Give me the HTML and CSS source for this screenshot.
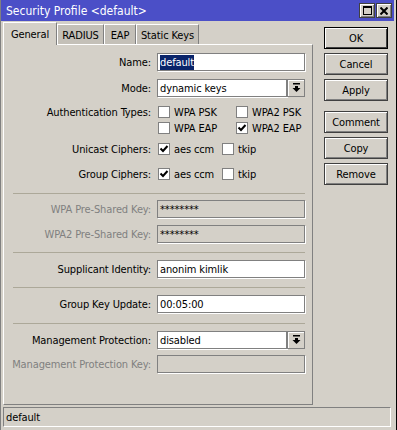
FILE: index.html
```html
<!DOCTYPE html>
<html lang="en">
<head>
  <meta charset="UTF-8" />
  <title>Security Profile &lt;default&gt;</title>
  <link rel="stylesheet" href="styles.css">
</head>
<body>
  <div class="window">
    <div class="titlebar">
      <span class="title">Security Profile &lt;default&gt;</span>
      <div class="winbtns">
        <span class="winbtn">
          <svg width="9" height="9" viewBox="0 0 9 9"><rect x="0.5" y="0.5" width="8" height="8" fill="none" stroke="#000"/><rect x="0" y="0" width="9" height="2" fill="#000"/></svg>
        </span>
        <span class="winbtn">
          <svg width="8" height="8" viewBox="0 0 8 8"><path d="M0.5 0.5 L7.5 7.5 M7.5 0.5 L0.5 7.5" stroke="#000" stroke-width="2"/></svg>
        </span>
      </div>
    </div>

    <div class="content">
      <div class="main">
        <div class="tabs">
          <span class="tab active tab-general">General</span>
          <span class="tab tab-radius">RADIUS</span>
          <span class="tab tab-eap">EAP</span>
          <span class="tab tab-keys">Static Keys</span>
        </div>

        <div class="panel">
          <div class="row row-name">
            <span class="lbl">Name:</span>
            <span class="input"><span class="selected">default</span></span>
          </div>
          <div class="row row-mode">
            <span class="lbl">Mode:</span>
            <span class="input input-combo">dynamic keys</span>
            <span class="dropbtn">
              <svg width="9" height="10" viewBox="0 0 9 10"><rect x="1" y="0" width="7" height="1.5" fill="#000"/><rect x="3" y="3" width="3" height="2" fill="#000"/><path d="M0.5 5 H8.5 L4.5 9 Z" fill="#000"/></svg>
            </span>
          </div>

          <div class="row-check row-auth1">
            <span class="lbl">Authentication Types:</span>
            <span class="check check-wide"><span class="box"></span>WPA PSK</span>
            <span class="check"><span class="box"></span>WPA2 PSK</span>
          </div>
          <div class="row-check row-auth2">
            <span class="lbl"></span>
            <span class="check check-wide"><span class="box"></span>WPA EAP</span>
            <span class="check"><span class="box"><svg width="10" height="10" viewBox="0 0 10 10"><path d="M1.5 4.5 L4 7 L8.5 2" fill="none" stroke="#000" stroke-width="2"/></svg></span>WPA2 EAP</span>
          </div>
          <div class="row-check row-unicast">
            <span class="lbl">Unicast Ciphers:</span>
            <span class="check check-mid"><span class="box"><svg width="10" height="10" viewBox="0 0 10 10"><path d="M1.5 4.5 L4 7 L8.5 2" fill="none" stroke="#000" stroke-width="2"/></svg></span>aes ccm</span>
            <span class="check"><span class="box"></span>tkip</span>
          </div>
          <div class="row-check row-group">
            <span class="lbl">Group Ciphers:</span>
            <span class="check check-mid"><span class="box"><svg width="10" height="10" viewBox="0 0 10 10"><path d="M1.5 4.5 L4 7 L8.5 2" fill="none" stroke="#000" stroke-width="2"/></svg></span>aes ccm</span>
            <span class="check"><span class="box"></span>tkip</span>
          </div>

          <div class="sep sep-1"></div>

          <div class="row row-psk">
            <span class="lbl disabled">WPA Pre-Shared Key:</span>
            <span class="input input-off">********</span>
          </div>
          <div class="row row-psk2">
            <span class="lbl disabled">WPA2 Pre-Shared Key:</span>
            <span class="input input-off">********</span>
          </div>

          <div class="sep"></div>

          <div class="row row-after-sep">
            <span class="lbl">Supplicant Identity:</span>
            <span class="input">anonim kimlik</span>
          </div>

          <div class="sep"></div>

          <div class="row row-after-sep">
            <span class="lbl">Group Key Update:</span>
            <span class="input">00:05:00</span>
          </div>

          <div class="sep sep-4"></div>

          <div class="row row-after-sep">
            <span class="lbl">Management Protection:</span>
            <span class="input input-combo">disabled</span>
            <span class="dropbtn">
              <svg width="9" height="10" viewBox="0 0 9 10"><rect x="1" y="0" width="7" height="1.5" fill="#000"/><rect x="3" y="3" width="3" height="2" fill="#000"/><path d="M0.5 5 H8.5 L4.5 9 Z" fill="#000"/></svg>
            </span>
          </div>
          <div class="row row-mkey">
            <span class="lbl disabled">Management Protection Key:</span>
            <span class="input input-off"></span>
          </div>
        </div>
      </div>

      <div class="side">
        <button class="btn btn-default">OK</button>
        <button class="btn">Cancel</button>
        <button class="btn">Apply</button>
        <button class="btn btn-gap">Comment</button>
        <button class="btn">Copy</button>
        <button class="btn">Remove</button>
      </div>
    </div>

    <div class="statusbar">default</div>
  </div>
</body>
</html>
```

FILE: styles.css
```css
* {
  box-sizing: border-box;
}
body {
  margin: 0;
  background: #d4d0c8;
  font-family: "DejaVu Sans Condensed", "Liberation Sans", Arial, sans-serif;
  font-size: 11px;
  letter-spacing: -0.12px;
  color: #000;
}
.window {
  width: 397px;
  height: 430px;
  display: flex;
  flex-direction: column;
  border-left: 1px solid #808080;
  border-right: 1px solid #000;
  padding-right: 2px;
  background: #d4d0c8;
  overflow: hidden;
}
.titlebar {
  height: 21px;
  background: #4b4fc7;
  color: #fff;
  display: flex;
  align-items: center;
  justify-content: space-between;
  padding: 0 2px 0 6px;
  margin-left: -1px;
}
.title {
  font-size: 12px;
  letter-spacing: 0;
  padding-top: 1px;
}
.winbtns {
  display: flex;
  gap: 1px;
}
.winbtn {
  width: 16px;
  height: 15px;
  background: #d4d0c8;
  border: 1px solid #404040;
  box-shadow: inset 1px 1px 0 #fff, inset -1px -1px 0 #808080;
  display: flex;
  align-items: center;
  justify-content: center;
}
.content {
  display: flex;
  margin-top: 1px;
}
.main {
  width: 310px;
  margin-left: 2px;
}
.tabs {
  height: 22px;
  display: flex;
  align-items: flex-end;
}
.tab {
  height: 20px;
  display: flex;
  align-items: center;
  justify-content: center;
  background: #c4c0b8;
  border-top: 1px solid #fff;
  border-left: 1px solid #fff;
  border-right: 1px solid #808080;
  padding-top: 1px;
}
.tab.active {
  height: 23px;
  margin-bottom: -1px;
  background: #d4d0c8;
  position: relative;
  z-index: 1;
  padding-top: 0;
}
.tab-general { width: 54px; }
.tab-radius { width: 47px; }
.tab-eap { width: 32px; }
.tab-keys { width: 63px; }

.panel {
  height: 361px;
  border-top: 1px solid #fff;
  border-left: 1px solid #fff;
  border-right: 1px solid #808080;
  border-bottom: 1px solid #808080;
  padding-top: 8px;
}
.row {
  display: flex;
  align-items: center;
  height: 18px;
}
.row-mode { margin-top: 8px; }
.row-psk { margin-top: 6px; }
.row-psk2 { margin-top: 7px; }
.row-after-sep { margin-top: 7px; }
.row-mkey { margin-top: 6px; }

.lbl {
  width: 147px;
  margin-right: 6px;
  text-align: right;
  white-space: nowrap;
}
.lbl.disabled {
  color: #808080;
}
.input {
  width: 148px;
  height: 18px;
  background: #fff;
  border: 1px solid #808080;
  box-shadow: 1px 1px 0 #fff;
  padding-left: 2px;
  display: flex;
  align-items: center;
  white-space: nowrap;
}
.input-combo {
  width: 130px;
}
.input-off {
  background: #d4d0c8;
}
.selected {
  background: #0a246a;
  color: #fff;
  padding: 1px 0;
}
.dropbtn {
  width: 18px;
  height: 18px;
  background: #d4d0c8;
  border: 1px solid #808080;
  box-shadow: inset 1px 1px 0 #fff;
  display: flex;
  align-items: center;
  justify-content: center;
}

.row-check {
  display: flex;
  align-items: center;
  height: 16px;
}
.row-auth1 { margin-top: 7px; }
.row-unicast { margin-top: 5px; }
.row-group { margin-top: 9px; }
.row-check .lbl {
  margin-right: 7px;
}
.check {
  display: flex;
  align-items: center;
  gap: 4px;
  white-space: nowrap;
}
.check-wide { width: 78px; }
.check-mid { width: 64px; }
.box {
  width: 12px;
  height: 12px;
  background: #fff;
  border: 1px solid #808080;
  display: flex;
  align-items: center;
  justify-content: center;
}

.sep {
  height: 1px;
  width: 292px;
  margin: 9px 0 0 9px;
  background: #aca899;
}
.sep-1 { margin-top: 11px; }
.sep-4 { margin-top: 10px; }

.side {
  display: flex;
  flex-direction: column;
  margin: 5px 0 0 11px;
}
.btn {
  width: 64px;
  height: 22px;
  margin-bottom: 4px;
  padding: 0;
  font-family: "DejaVu Sans Condensed", "Liberation Sans", Arial, sans-serif;
  font-size: 11px;
  letter-spacing: -0.12px;
  color: #000;
  background: #d4d0c8;
  border: 1px solid #404040;
  box-shadow: inset 1px 1px 0 #fff, inset -1px -1px 0 #808080;
}
.btn-default {
  border-color: #000;
  box-shadow: inset 1px 1px 0 #fff, inset -1px -1px 0 #404040;
}
.btn-gap {
  margin-top: 6px;
}
.statusbar {
  height: 20px;
  width: 388px;
  margin: 2px 0 0 2px;
  border-top: 1px solid #808080;
  border-left: 1px solid #808080;
  border-bottom: 1px solid #fff;
  border-right: 1px solid #fff;
  padding-left: 2px;
  display: flex;
  align-items: center;
}
```
